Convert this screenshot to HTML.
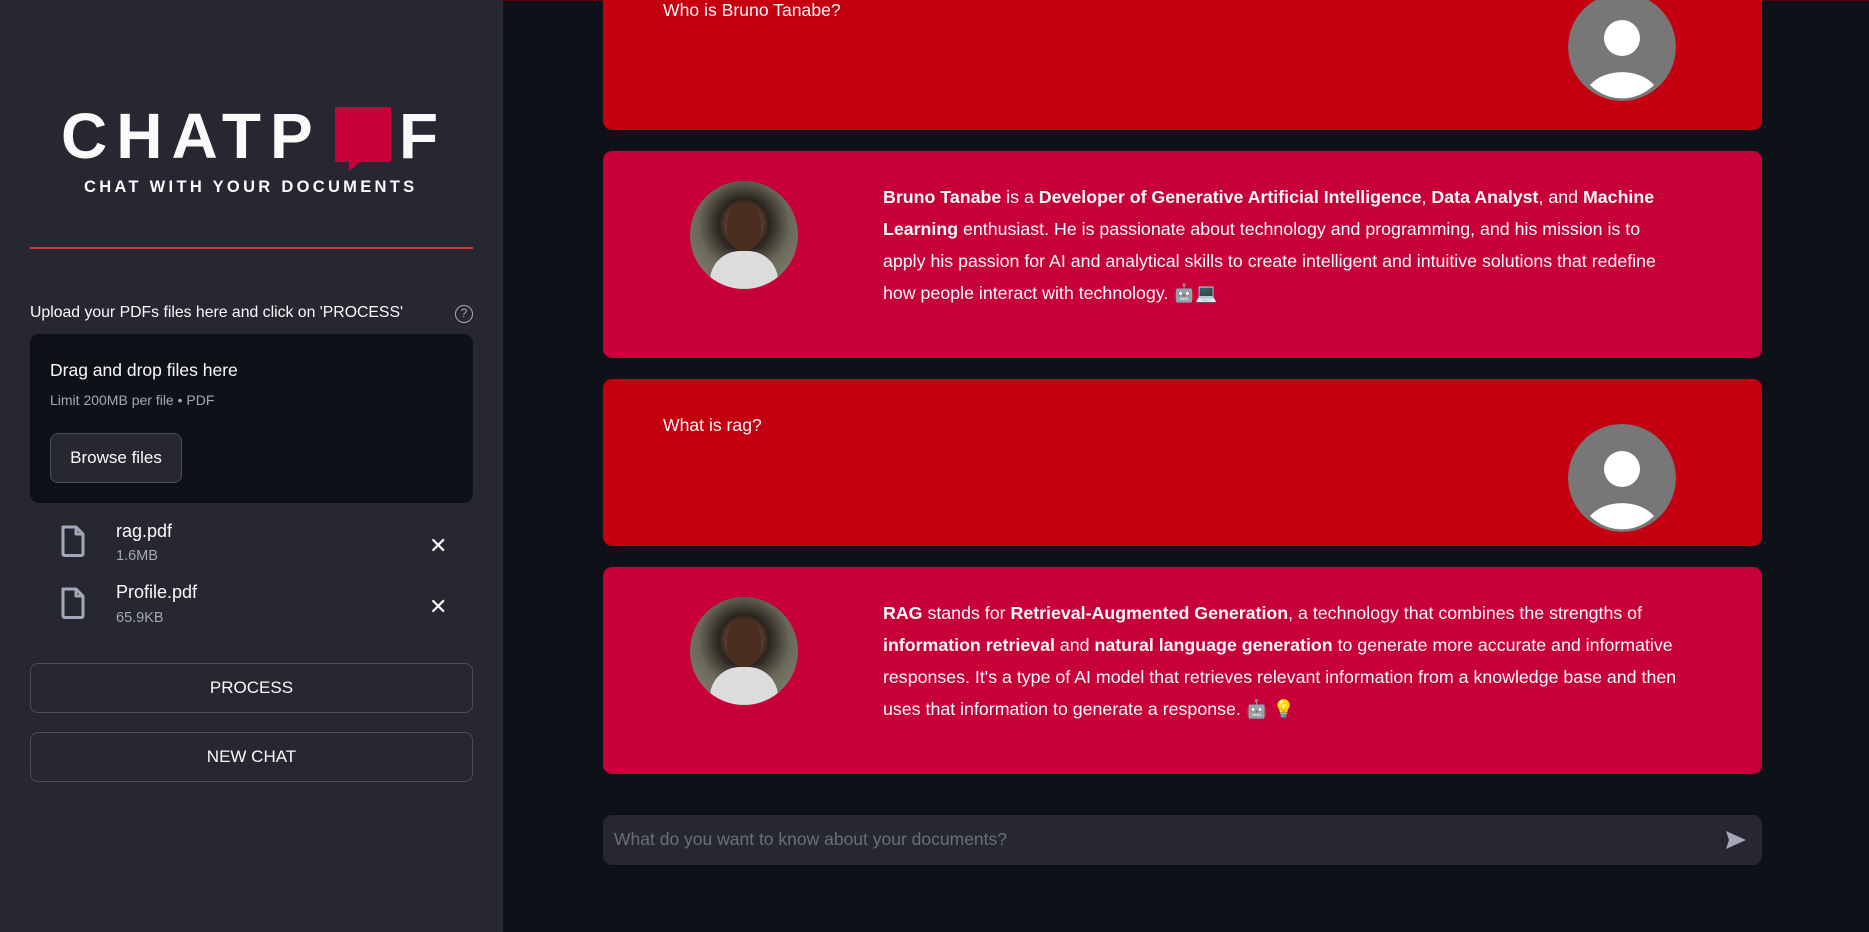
<!DOCTYPE html>
<html><head><meta charset="utf-8"><style>
*{box-sizing:border-box;margin:0;padding:0}
body{width:1869px;height:932px;background:#0e1117;font-family:"Liberation Sans",sans-serif;color:#fafafa;position:relative;overflow:hidden}
.sb{position:absolute;left:0;top:0;width:503px;height:932px;background:#262730}
.abs{position:absolute}
.card{position:absolute;left:603px;width:1159px;border-radius:9px}
.u{background:#c40010}
.b{background:#c8003a}
.txt{position:absolute;left:280px;width:800px;font-size:17.8px;line-height:32px}
.txt b{font-weight:bold}
.av{position:absolute;width:108px;height:108px;border-radius:50%;overflow:hidden}
.btn{position:absolute;left:30px;width:443px;height:50px;border:1px solid #4a4c56;border-radius:8px;text-align:center;line-height:48px;font-size:17px}
</style></head><body>
<div class="abs" style="left:0;top:0;width:1869px;height:1px;background:#600"></div>
<div class="sb">
 <div class="abs" style="left:61px;top:104px;font-size:64px;font-weight:bold;letter-spacing:9px;line-height:64px;white-space:nowrap">CHATP</div>
 <div class="abs" style="left:399px;top:104px;font-size:64px;font-weight:bold;line-height:64px">F</div>
 <div class="abs" style="left:335px;top:107px;width:56px;height:55px;background:#c8003a"></div>
 <div class="abs" style="left:349px;top:161px;width:0;height:0;border-left:12px solid #c8003a;border-bottom:10px solid transparent"></div>
 <div class="abs" style="left:84px;top:178px;font-size:16.5px;font-weight:bold;letter-spacing:3.3px;white-space:nowrap">CHAT WITH YOUR DOCUMENTS</div>
 <div class="abs" style="left:30px;top:247px;width:443px;height:2px;background:#d0393f"></div>
 <div class="abs" style="left:30px;top:304px;font-size:15.8px">Upload your PDFs files here and click on 'PROCESS'</div>
 <div class="abs" style="left:455px;top:305px;width:18px;height:18px;border:1.5px solid #aaa;border-radius:50%;font-size:12px;line-height:15px;text-align:center;color:#aaa">?</div>
 <div class="abs" style="left:30px;top:334px;width:443px;height:169px;background:#0e1117;border-radius:9px">
  <div class="abs" style="left:20px;top:26px;font-size:17.5px">Drag and drop files here</div>
  <div class="abs" style="left:20px;top:58px;font-size:14px;color:#a3a8b4">Limit 200MB per file • PDF</div>
  <div class="abs" style="left:20px;top:99px;width:132px;height:50px;background:#262730;border:1px solid #4a4c56;border-radius:8px;text-align:center;line-height:48px;font-size:17px">Browse files</div>
 </div>
 <svg class="abs" style="left:60px;top:525px" width="26" height="32" viewBox="0 0 26 32"><path d="M3 2h13l7 7v20a1.5 1.5 0 0 1-1.5 1.5h-17A1.5 1.5 0 0 1 3 29z M16 2v7h7" fill="none" stroke="#a3a8b8" stroke-width="3" stroke-linejoin="round"/></svg>
 <div class="abs" style="left:116px;top:521px;font-size:18px">rag.pdf</div>
 <div class="abs" style="left:116px;top:548px;font-size:14.5px;color:#a3a8b4">1.6MB</div>
 <div class="abs" style="left:429px;top:533px;font-size:22px">✕</div>
 <svg class="abs" style="left:60px;top:587px" width="26" height="32" viewBox="0 0 26 32"><path d="M3 2h13l7 7v20a1.5 1.5 0 0 1-1.5 1.5h-17A1.5 1.5 0 0 1 3 29z M16 2v7h7" fill="none" stroke="#a3a8b8" stroke-width="3" stroke-linejoin="round"/></svg>
 <div class="abs" style="left:116px;top:582px;font-size:18px">Profile.pdf</div>
 <div class="abs" style="left:116px;top:610px;font-size:14.5px;color:#a3a8b4">65.9KB</div>
 <div class="abs" style="left:429px;top:594px;font-size:22px">✕</div>
 <div class="btn" style="top:663px">PROCESS</div>
 <div class="btn" style="top:732px">NEW CHAT</div>
</div>

<div class="card u" style="top:-10px;height:140px">
 <div class="abs" style="left:60px;top:10px;font-size:17.6px">Who is Bruno Tanabe?</div>
 <svg class="av" style="left:965px;top:3px" viewBox="0 0 108 108"><circle cx="54" cy="54" r="54" fill="#777"/><circle cx="54" cy="45" r="18" fill="#fff"/><path d="M22 92a38 28 0 0 1 64 0a45 45 0 0 1-64 0z" fill="#fff"/></svg>
</div>
<div class="card b" style="top:151px;height:207px">
 <div class="av" style="left:87px;top:30px;background:radial-gradient(circle at 50% 40%,#5a3a2a 0 22%,#2a2420 30%,#6b6a5a 55%,#8a8878 100%)"><div class="abs" style="left:20px;top:70px;width:68px;height:50px;background:#ddd;border-radius:30px 30px 0 0"></div><div class="abs" style="left:37px;top:22px;width:34px;height:48px;background:#4a2e20;border-radius:45%"></div></div>
 <div class="txt" style="top:30px"><b>Bruno Tanabe</b> is a <b>Developer of Generative Artificial Intelligence</b>, <b>Data Analyst</b>, and <b>Machine Learning</b> enthusiast. He is passionate about technology and programming, and his mission is to apply his passion for AI and analytical skills to create intelligent and intuitive solutions that redefine how people interact with technology. 🤖💻</div>
</div>
<div class="card u" style="top:379px;height:167px">
 <div class="abs" style="left:60px;top:36px;font-size:17.6px">What is rag?</div>
 <svg class="av" style="left:965px;top:45px" viewBox="0 0 108 108"><circle cx="54" cy="54" r="54" fill="#777"/><circle cx="54" cy="45" r="18" fill="#fff"/><path d="M22 92a38 28 0 0 1 64 0a45 45 0 0 1-64 0z" fill="#fff"/></svg>
</div>
<div class="card b" style="top:567px;height:207px">
 <div class="av" style="left:87px;top:30px;background:radial-gradient(circle at 50% 40%,#5a3a2a 0 22%,#2a2420 30%,#6b6a5a 55%,#8a8878 100%)"><div class="abs" style="left:20px;top:70px;width:68px;height:50px;background:#ddd;border-radius:30px 30px 0 0"></div><div class="abs" style="left:37px;top:22px;width:34px;height:48px;background:#4a2e20;border-radius:45%"></div></div>
 <div class="txt" style="top:30px"><b>RAG</b> stands for <b>Retrieval-Augmented Generation</b>, a technology that combines the strengths of <b>information retrieval</b> and <b>natural language generation</b> to generate more accurate and informative responses. It's a type of AI model that retrieves relevant information from a knowledge base and then uses that information to generate a response. 🤖 💡</div>
</div>
<div class="abs" style="left:603px;top:815px;width:1159px;height:50px;background:#262730;border-radius:9px">
 <div class="abs" style="left:11px;top:14px;font-size:17.5px;color:#6b6e7c">What do you want to know about your documents?</div>
 <svg class="abs" style="left:1122px;top:14px" width="22" height="22" viewBox="0 0 22 22"><path d="M1 2l20 9-20 9 3-9z" fill="#a3a8b8"/></svg>
</div>
</body></html>
